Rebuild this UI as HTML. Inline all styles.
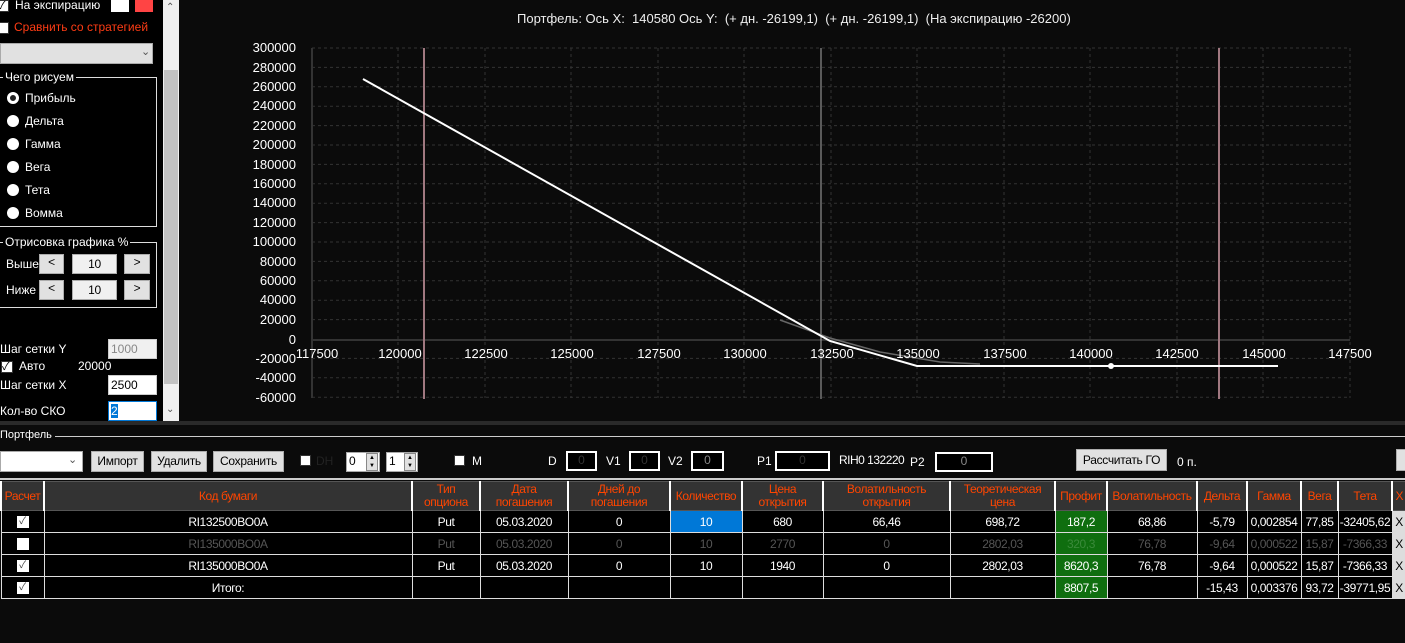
<!DOCTYPE html>
<html><head><meta charset="utf-8"><style>
*{margin:0;padding:0;box-sizing:border-box}
body{width:1405px;height:643px;background:#0b0b0b;font-family:"Liberation Sans","Noto Sans CJK SC",sans-serif;font-size:12px;color:#fff;position:relative;overflow:hidden}
.a{position:absolute;white-space:nowrap}
.btn{position:absolute;background:#e1e1e1;border:1px solid #adadad;color:#000;font-size:12px;text-align:center;letter-spacing:-0.3px}
.cb{position:absolute;width:12px;height:12px;background:#fff;border:1px solid #333}
.rd{position:absolute;width:12px;height:12px;border-radius:50%;background:#fff}
.tb{position:absolute;border:2px solid #fff;background:#000;color:#333;text-align:center;font-size:12px}
table{position:absolute;left:0;top:481px;border-collapse:collapse;table-layout:fixed;width:1405px}
td{border:1px solid #ddd;height:22px;text-align:center;font-size:12px;letter-spacing:-0.4px;color:#fff;background:#000;overflow:hidden;white-space:nowrap}
tr.h td{background:#333;color:#ff4500;height:29px;line-height:13px;border-color:#555;border-left:2px solid #fff}
tr.g td{color:#555}
td.p{background:#0f6e0f}
.ck{display:inline-block;width:12px;height:12px;background:#fff;color:#444;font-size:10px;line-height:12px;vertical-align:middle}
.sp{position:absolute;width:12px;height:18px;background:#e1e1e1;border:1px solid #888;font-size:6px;color:#000;line-height:8px;text-align:center}
</style></head><body>
<div class="a" style="left:0;top:0;width:163px;height:421px;background:#000"></div>
<div class="a" style="left:163px;top:0;width:16px;height:421px;background:#f0f0f0"></div>
<div class="a" style="left:164px;top:70px;width:14px;height:314px;background:#c2c2c2"></div>
<div class="a" style="left:166px;top:2px;font-size:10px;color:#555">&#8963;</div>
<div class="a" style="left:166px;top:404px;font-size:10px;color:#555">&#8964;</div>
<div class="cb" style="left:-3px;top:0"></div><div class="a" style="left:-2px;top:-3px;color:#000;font-size:11px">✓</div>
<div class="a" style="left:15px;top:-2px">На экспирацию</div>
<div class="a" style="left:111px;top:0;width:18px;height:12px;background:#fff"></div>
<div class="a" style="left:135px;top:0;width:18px;height:12px;background:#f44"></div>
<div class="cb" style="left:-3px;top:22px"></div>
<div class="a" style="left:14px;top:20px;color:#ff3c14">Сравнить со стратегией</div>
<div class="a" style="left:0;top:43px;width:153px;height:21px;background:#e1e1e1;border:1px solid #aaa"></div>
<div class="a" style="left:141px;top:45px;color:#555;font-size:11px">&#8964;</div>
<div class="a" style="left:0;top:77px;width:157px;height:150px;border:1px solid #ddd;border-left:none"></div>
<div class="a" style="left:3px;top:70px;background:#000;padding:0 2px">Чего рисуем</div>
<div class="rd" style="left:7px;top:92px;border:3px solid #fff;background:#222"></div><div class="a" style="left:25px;top:91px">Прибыль</div>
<div class="rd" style="left:7px;top:115px"></div><div class="a" style="left:25px;top:114px">Дельта</div>
<div class="rd" style="left:7px;top:138px"></div><div class="a" style="left:25px;top:137px">Гамма</div>
<div class="rd" style="left:7px;top:161px"></div><div class="a" style="left:25px;top:160px">Вега</div>
<div class="rd" style="left:7px;top:184px"></div><div class="a" style="left:25px;top:183px">Тета</div>
<div class="rd" style="left:7px;top:207px"></div><div class="a" style="left:25px;top:206px">Вомма</div>
<div class="a" style="left:0;top:242px;width:157px;height:66px;border:1px solid #ddd;border-left:none"></div>
<div class="a" style="left:3px;top:235px;background:#000;padding:0 2px">Отрисовка графика %</div>
<div class="a" style="left:6px;top:257px">Выше</div>
<div class="btn" style="left:39px;top:254px;width:25px;height:20px">&lt;</div>
<div class="btn" style="left:72px;top:254px;width:45px;height:20px;background:#f0f0f0;line-height:18px">10</div>
<div class="btn" style="left:124px;top:254px;width:26px;height:20px">&gt;</div>
<div class="a" style="left:6px;top:283px">Ниже</div>
<div class="btn" style="left:39px;top:280px;width:25px;height:20px">&lt;</div>
<div class="btn" style="left:72px;top:280px;width:45px;height:20px;background:#f0f0f0;line-height:18px">10</div>
<div class="btn" style="left:124px;top:280px;width:26px;height:20px">&gt;</div>
<div class="a" style="left:0;top:342px">Шаг сетки Y</div>
<div class="a" style="left:108px;top:339px;width:49px;height:20px;background:#f0f0f0;border:1px solid #ccc;color:#888;padding:2px 2px">1000</div>
<div class="cb" style="left:1px;top:361px"></div><div class="a" style="left:2px;top:358px;color:#000;font-size:11px">✓</div>
<div class="a" style="left:19px;top:359px">Авто</div><div class="a" style="left:78px;top:359px">20000</div>
<div class="a" style="left:0;top:378px">Шаг сетки X</div>
<div class="a" style="left:108px;top:375px;width:49px;height:20px;background:#fff;border:1px solid #ccc;color:#000;padding:2px 2px">2500</div>
<div class="a" style="left:0;top:404px">Кол-во СКО</div>
<div class="a" style="left:108px;top:401px;width:49px;height:20px;background:#fff;border:1px solid #0078d7;color:#000;padding:2px 2px"><span style="background:#0078d7;color:#fff">2</span></div>
<div class="a" style="left:179px;top:0;width:1226px;height:421px;background:#0b0b0b"></div>
<div class="a" style="left:517px;top:11px;font-size:13px;color:#eee">Портфель: Ось X:&nbsp; 140580 Ось Y:&nbsp; (+ дн. -26199,1)&nbsp; (+ дн. -26199,1)&nbsp; (На экспирацию -26200)</div>
<svg class="a" style="left:0;top:0" width="1405" height="421" font-family="Liberation Sans,sans-serif" font-size="13">
<g stroke="#333" stroke-dasharray="3,3" stroke-width="1">
<line x1="312" y1="48" x2="1350" y2="48"/><line x1="312" y1="67.4" x2="1350" y2="67.4"/><line x1="312" y1="86.8" x2="1350" y2="86.8"/><line x1="312" y1="106.2" x2="1350" y2="106.2"/><line x1="312" y1="125.6" x2="1350" y2="125.6"/><line x1="312" y1="145" x2="1350" y2="145"/><line x1="312" y1="164.4" x2="1350" y2="164.4"/><line x1="312" y1="183.8" x2="1350" y2="183.8"/><line x1="312" y1="203.2" x2="1350" y2="203.2"/><line x1="312" y1="222.6" x2="1350" y2="222.6"/><line x1="312" y1="242" x2="1350" y2="242"/><line x1="312" y1="261.4" x2="1350" y2="261.4"/><line x1="312" y1="280.8" x2="1350" y2="280.8"/><line x1="312" y1="300.2" x2="1350" y2="300.2"/><line x1="312" y1="319.6" x2="1350" y2="319.6"/><line x1="312" y1="358.4" x2="1350" y2="358.4"/><line x1="312" y1="377.8" x2="1350" y2="377.8"/><line x1="312" y1="397.2" x2="1350" y2="397.2"/>
<line x1="398" y1="48" x2="398" y2="398"/><line x1="485" y1="48" x2="485" y2="398"/><line x1="571" y1="48" x2="571" y2="398"/><line x1="658" y1="48" x2="658" y2="398"/><line x1="744" y1="48" x2="744" y2="398"/><line x1="831" y1="48" x2="831" y2="398"/><line x1="917" y1="48" x2="917" y2="398"/><line x1="1004" y1="48" x2="1004" y2="398"/><line x1="1090" y1="48" x2="1090" y2="398"/><line x1="1177" y1="48" x2="1177" y2="398"/><line x1="1263" y1="48" x2="1263" y2="398"/><line x1="1350" y1="48" x2="1350" y2="398"/>
</g>
<line x1="312" y1="48" x2="312" y2="398" stroke="#333" stroke-width="2"/>
<line x1="312" y1="340" x2="1350" y2="340" stroke="#333" stroke-width="2"/>
<line x1="424" y1="48" x2="424" y2="399" stroke="#a07880" stroke-width="2"/>
<line x1="1219" y1="48" x2="1219" y2="399" stroke="#a07880" stroke-width="2"/>
<line x1="821" y1="48" x2="821" y2="399" stroke="#aaa" stroke-width="1"/>
<polyline points="780,320 830,338 880,352 940,362 980,364" fill="none" stroke="#666" stroke-width="1.5"/>
<polyline points="363,79 830,341 917,366 1278,366" fill="none" stroke="#fff" stroke-width="2"/>
<circle cx="1111" cy="366" r="3" fill="#fff"/>
<g fill="#fff" text-anchor="end">
<text x="296" y="52">300000</text><text x="296" y="72">280000</text><text x="296" y="91">260000</text><text x="296" y="110">240000</text><text x="296" y="130">220000</text><text x="296" y="149">200000</text><text x="296" y="169">180000</text><text x="296" y="188">160000</text><text x="296" y="207">140000</text><text x="296" y="227">120000</text><text x="296" y="246">100000</text><text x="296" y="266">80000</text><text x="296" y="285">60000</text><text x="296" y="304">40000</text><text x="296" y="324">20000</text><text x="296" y="344">0</text><text x="296" y="363">-20000</text><text x="296" y="382">-40000</text><text x="296" y="402">-60000</text>
</g>
<g fill="#fff" text-anchor="middle">
<text x="317" y="358">117500</text><text x="400" y="358">120000</text><text x="486" y="358">122500</text><text x="572" y="358">125000</text><text x="659" y="358">127500</text><text x="745" y="358">130000</text><text x="832" y="358">132500</text><text x="918" y="358">135000</text><text x="1005" y="358">137500</text><text x="1091" y="358">140000</text><text x="1177" y="358">142500</text><text x="1264" y="358">145000</text><text x="1350" y="358">147500</text>
</g>
</svg>
<div class="a" style="left:0;top:421px;width:1405px;height:4px;background:#2a2a2a"></div>
<div class="a" style="left:0;top:436px;width:1405px;height:1px;background:#ccc"></div>
<div class="a" style="left:0;top:429px;background:#0b0b0b;padding-right:3px;font-size:11px">Портфель</div>
<div class="a" style="left:0;top:451px;width:83px;height:21px;background:#fff;border:1px solid #aaa"></div>
<div class="a" style="left:68px;top:453px;color:#555;font-size:11px">&#8964;</div>
<div class="btn" style="left:91px;top:451px;width:53px;height:21px;line-height:19px">Импорт</div>
<div class="btn" style="left:151px;top:451px;width:56px;height:21px;line-height:19px">Удалить</div>
<div class="btn" style="left:213px;top:451px;width:71px;height:21px;line-height:19px">Сохранить</div>
<div class="cb" style="left:300px;top:455px;width:11px;height:11px"></div><div class="a" style="left:316px;top:454px;color:#222">DH</div>
<div class="a" style="left:346px;top:452px;width:34px;height:20px;background:#fff;border:1px solid #aaa;color:#000;padding:1px 2px">0</div>
<div class="sp" style="left:366px;top:453px">▲<br>▼</div>
<div class="a" style="left:386px;top:452px;width:32px;height:20px;background:#fff;border:1px solid #aaa;color:#000;padding:1px 2px">1</div>
<div class="sp" style="left:404px;top:453px">▲<br>▼</div>
<div class="cb" style="left:454px;top:455px;width:11px;height:11px"></div><div class="a" style="left:472px;top:454px">M</div>
<div class="a" style="left:548px;top:454px">D</div><div class="tb" style="left:566px;top:451px;width:31px;height:20px">0</div>
<div class="a" style="left:606px;top:454px">V1</div><div class="tb" style="left:629px;top:451px;width:31px;height:20px">0</div>
<div class="a" style="left:668px;top:454px">V2</div><div class="tb" style="left:691px;top:451px;width:33px;height:20px;color:#888">0</div>
<div class="a" style="left:757px;top:454px">P1</div><div class="tb" style="left:775px;top:451px;width:55px;height:20px">0</div>
<div class="a" style="left:839px;top:453px;letter-spacing:-0.5px">RIH0 132220</div><div class="a" style="left:910px;top:455px">P2</div>
<div class="tb" style="left:935px;top:452px;width:58px;height:20px;color:#888">0</div>
<div class="btn" style="left:1076px;top:449px;width:91px;height:22px;line-height:20px">Рассчитать ГО</div>
<div class="a" style="left:1177px;top:455px">0 п.</div>
<div class="btn" style="left:1396px;top:449px;width:12px;height:22px"></div>
<div class="a" style="left:0;top:478px;width:1405px;height:2px;background:#ccc"></div>
<table>
<colgroup><col style="width:43px"><col style="width:368px"><col style="width:68px"><col style="width:88px"><col style="width:102px"><col style="width:72px"><col style="width:81px"><col style="width:127px"><col style="width:105px"><col style="width:52px"><col style="width:90px"><col style="width:50px"><col style="width:54px"><col style="width:37px"><col style="width:54px"><col style="width:14px"></colgroup>
<tr class="h"><td>Расчет</td><td>Код бумаги</td><td>Тип<br>опциона</td><td>Дата<br>погашения</td><td>Дней до<br>погашения</td><td>Количество</td><td>Цена<br>открытия</td><td>Волатильность<br>открытия</td><td>Теоретическая<br>цена</td><td>Профит</td><td>Волатильность</td><td>Дельта</td><td>Гамма</td><td>Вега</td><td>Тета</td><td>Х</td></tr>
<tr><td><span class="ck">✓</span></td><td>RI132500BO0A</td><td>Put</td><td>05.03.2020</td><td>0</td><td style="background:#0078d7">10</td><td>680</td><td>66,46</td><td>698,72</td><td class="p">187,2</td><td>68,86</td><td>-5,79</td><td>0,002854</td><td>77,85</td><td>-32405,62</td><td style="background:#ddd;color:#000">X</td></tr>
<tr class="g"><td><span class="ck"></span></td><td>RI135000BO0A</td><td>Put</td><td>05.03.2020</td><td>0</td><td>10</td><td>2770</td><td>0</td><td>2802,03</td><td class="p" style="color:#3a8a3a">320,3</td><td>76,78</td><td>-9,64</td><td>0,000522</td><td>15,87</td><td>-7366,33</td><td style="background:#ddd;color:#000">X</td></tr>
<tr><td><span class="ck">✓</span></td><td>RI135000BO0A</td><td>Put</td><td>05.03.2020</td><td>0</td><td>10</td><td>1940</td><td>0</td><td>2802,03</td><td class="p">8620,3</td><td>76,78</td><td>-9,64</td><td>0,000522</td><td>15,87</td><td>-7366,33</td><td style="background:#ddd;color:#000">X</td></tr>
<tr><td><span class="ck">✓</span></td><td>Итого:</td><td></td><td></td><td></td><td></td><td></td><td></td><td></td><td class="p">8807,5</td><td></td><td>-15,43</td><td>0,003376</td><td>93,72</td><td>-39771,95</td><td style="background:#ddd;color:#000">X</td></tr>
</table>
</body></html>
